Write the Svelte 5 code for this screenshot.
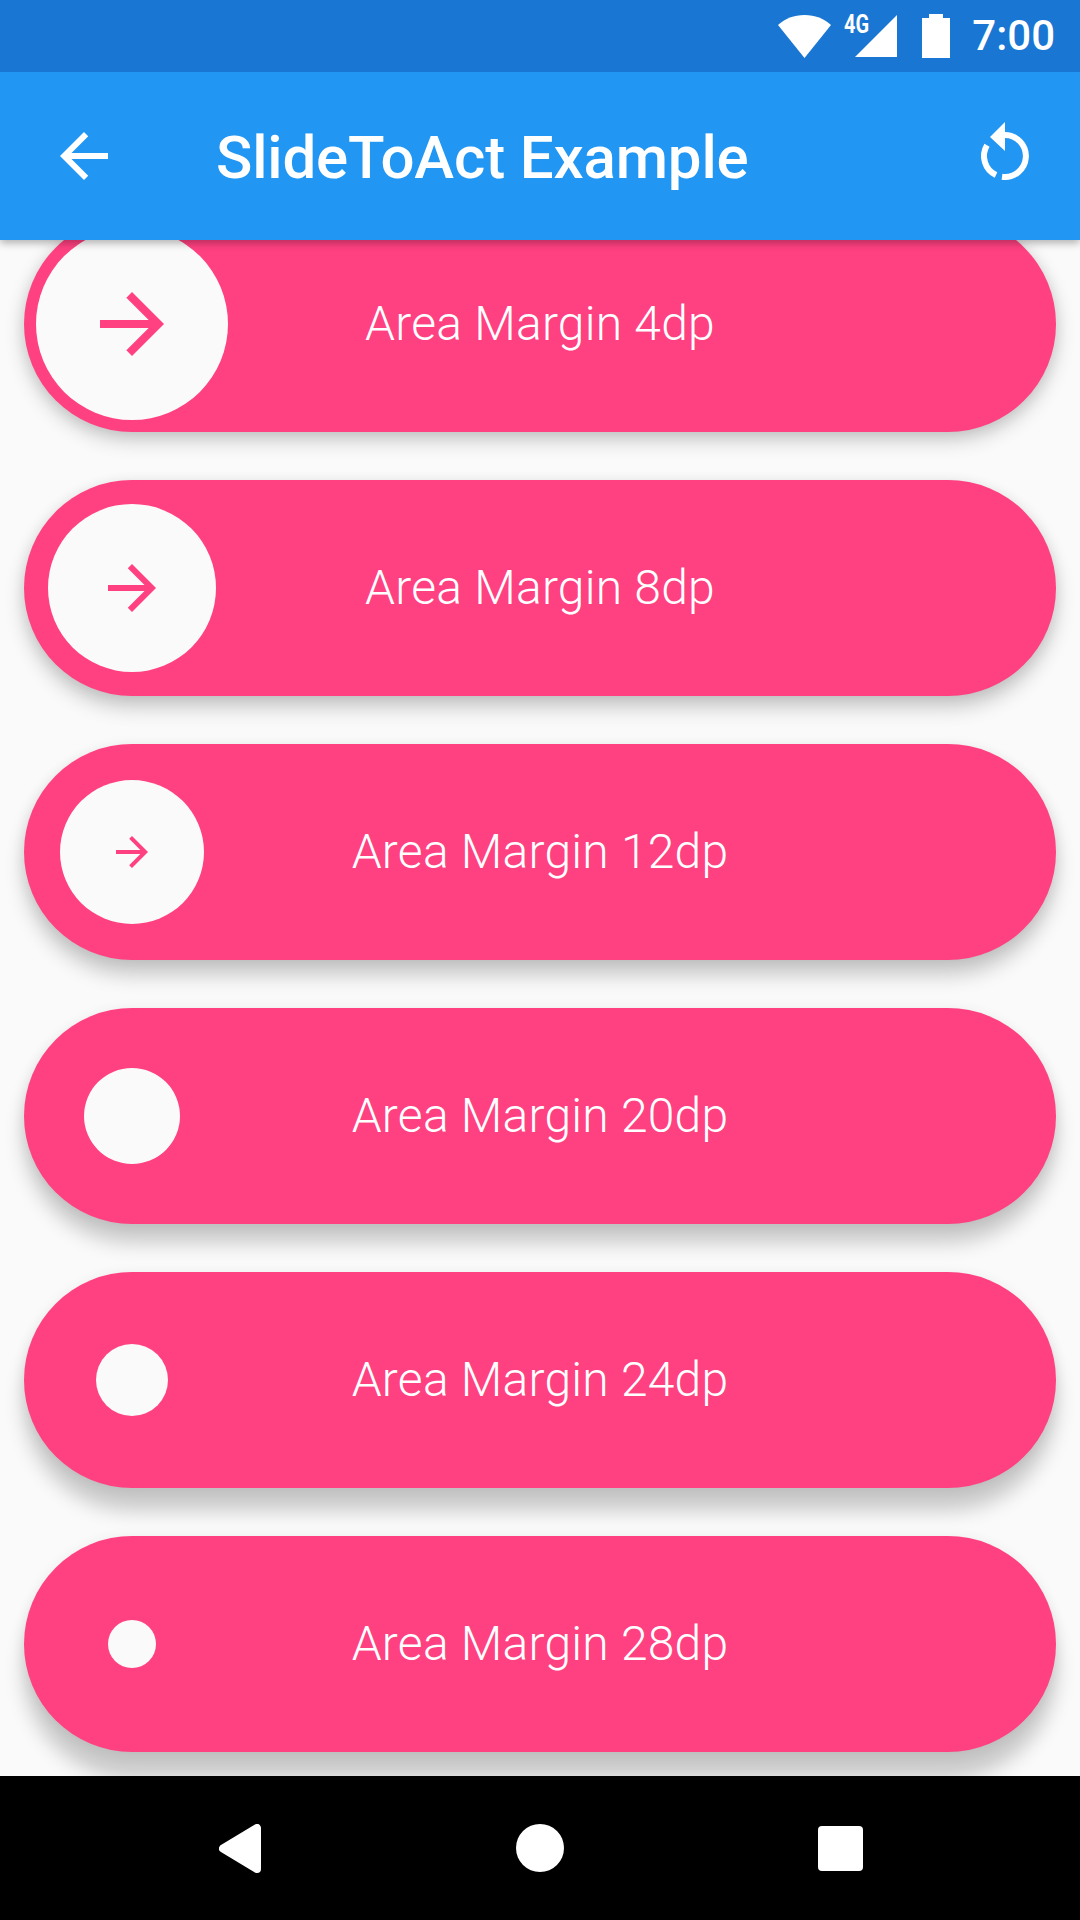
<script>
  const sliders = [
    { label: 'Area Margin 4dp', knob: 192, icon: 96 },
    { label: 'Area Margin 8dp', knob: 168, icon: 72 },
    { label: 'Area Margin 12dp', knob: 144, icon: 48 },
    { label: 'Area Margin 20dp', knob: 96, icon: 0 },
    { label: 'Area Margin 24dp', knob: 72, icon: 0 },
    { label: 'Area Margin 28dp', knob: 48, icon: 0 },
  ];

  // android light sits above the screen, lower cards throw a longer shadow
  const shadow = (i) => `0 ${8 + i * 3.6}px 20px rgba(0, 0, 0, 0.2), 0 2px 14px rgba(0, 0, 0, 0.07)`;
</script>

<div class="phone">
  <header>
    <div class="status">
      <svg class="wifi" width="53" height="43" viewBox="0 0 53 43">
        <path d="M0 10C7 3.500 16 0 26.500 0S46 3.500 53 10L26.500 43z" fill="#fff" />
      </svg>
      <div class="signal">
        <span class="net">4G</span>
        <svg width="42" height="42" viewBox="0 0 42 42"><path d="M42 0v42H0z" fill="#fff" /></svg>
      </div>
      <svg class="battery" width="28" height="44" viewBox="0 0 28 44">
        <path d="M7 0h14v4h7v40H0V4h7z" fill="#fff" />
      </svg>
      <span class="time">7:00</span>
    </div>
    <div class="toolbar">
      <svg class="back" width="72" height="72" viewBox="0 0 24 24">
        <path d="M20 11H7.830l5.590-5.590L12 4l-8 8 8 8 1.410-1.410L7.830 13H20v-2z" fill="#fff" />
      </svg>
      <h1>SlideToAct Example</h1>
      <svg class="reset" width="72" height="72" viewBox="0 0 72 72">
        <path d="M21 17L36 2v29z" fill="#fff" />
        <path d="M36 15A21 21 0 1 1 33 56.800" fill="none" stroke="#fff" stroke-width="6" />
        <path d="M27 55A21 21 0 0 1 18 25.200" fill="none" stroke="#fff" stroke-width="6" />
      </svg>
    </div>
  </header>

  <main>
    <div class="list">
      {#each sliders as s, i}
        <div class="slider" style="box-shadow: {shadow(i)}">
          <div class="track">
            <div class="knob" style="width: {s.knob}px; height: {s.knob}px">
              {#if s.icon}
                <svg width={s.icon} height={s.icon} viewBox="0 0 24 24">
                  <path d="M12 4l-1.410 1.410L16.170 11H4v2h12.170l-5.580 5.590L12 20l8-8z" fill="#ff4081" />
                </svg>
              {/if}
            </div>
          </div>
          <span class="label">{s.label}</span>
        </div>
      {/each}
    </div>
  </main>

  <nav>
    <svg width="42" height="49" viewBox="0 0 42 49">
      <path d="M38 4v41L4 24.500z" fill="#fff" stroke="#fff" stroke-width="8" stroke-linejoin="round" />
    </svg>
    <div class="home"></div>
    <div class="recents"></div>
  </nav>
</div>

<style>
  :global(body) {
    margin: 0;
    background: #fafafa;
  }

  .phone {
    display: flex;
    flex-direction: column;
    width: 1080px;
    height: 1920px;
    overflow: hidden;
    font-family: Roboto, sans-serif;
    color: #fff;
  }

  header {
    position: relative;
    z-index: 2;
    box-shadow: 0 3px 8px rgba(0, 0, 0, 0.3);
  }

  .status {
    display: flex;
    align-items: center;
    justify-content: flex-end;
    height: 72px;
    padding-right: 25px;
    background: #1976d2;
  }

  .wifi {
    margin-right: 13px;
  }

  .signal {
    position: relative;
    display: flex;
    margin-right: 25px;
    padding-left: 11px;
  }

  .net {
    position: absolute;
    top: -3px;
    left: 0;
    font-size: 25px;
    font-weight: 700;
    line-height: 25px;
    transform: scaleX(0.8);
    transform-origin: left;
  }

  .battery {
    margin-right: 22px;
  }

  .time {
    font-size: 42px;
    font-weight: 500;
    line-height: 72px;
  }

  .toolbar {
    display: flex;
    align-items: center;
    height: 168px;
    padding: 0 39px 0 48px;
    background: #2196f3;
  }

  h1 {
    flex: 1;
    margin: 0 0 0 96px;
    padding-top: 2px;
    font-size: 60px;
    font-weight: 500;
    letter-spacing: -0.15px;
  }

  main {
    flex: 1;
    min-height: 0;
    overflow: hidden;
    background: #fafafa;
  }

  .list {
    display: flex;
    flex-direction: column;
    gap: 48px;
    margin-top: -24px;
    padding: 0 24px;
  }

  .slider {
    position: relative;
    display: flex;
    align-items: center;
    justify-content: center;
    height: 216px;
    border-radius: 108px;
    background: #ff4081;
  }

  .track {
    position: absolute;
    top: 0;
    bottom: 0;
    left: 0;
    display: flex;
    align-items: center;
    justify-content: center;
    width: 216px;
  }

  .knob {
    display: flex;
    align-items: center;
    justify-content: center;
    border-radius: 50%;
    background: #fafafa;
  }

  .label {
    padding-bottom: 2px;
    font-size: 48px;
    font-weight: 300;
    letter-spacing: 0.23px;
  }

  nav {
    display: grid;
    flex: none;
    grid-template-columns: repeat(3, 300px);
    align-items: center;
    justify-content: center;
    justify-items: center;
    height: 144px;
    background: #000;
  }

  .home {
    width: 48px;
    height: 48px;
    border-radius: 50%;
    background: #fff;
  }

  .recents {
    width: 45px;
    height: 45px;
    border-radius: 4px;
    background: #fff;
  }
</style>
